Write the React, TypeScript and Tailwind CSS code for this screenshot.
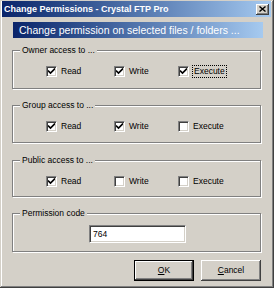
import type { ReactNode } from "react";

const font = "font-['Liberation_Sans',Arial,sans-serif]";

function CheckBox({ checked, label, focused }: { checked: boolean; label: string; focused?: boolean }) {
  return (
    <div className="flex items-center gap-[4px]">
      <div className="w-[11px] h-[11px] bg-white border border-[#808080] border-r-white border-b-white shadow-[inset_1px_1px_0_#404040,inset_-1px_-1px_0_#D4D0C8] flex items-center justify-center">
        {checked && (
          <svg width="7" height="7" viewBox="0 0 7 7">
            <path d="M0 2.5 L2.5 5 L7 0.5" stroke="#000" strokeWidth="1.6" fill="none" />
          </svg>
        )}
      </div>
      <span className={focused ? "text-[8.5px] leading-[11px] px-[1px] outline outline-1 outline-dotted outline-[#000]" : "text-[8.5px] leading-[11px]"}>
        {label}
      </span>
    </div>
  );
}

function GroupBox({ title, className, children }: { title: string; className: string; children: ReactNode }) {
  return (
    <div className={`relative ml-[12px] w-[249px] border border-[#808080] shadow-[inset_1px_1px_0_#fff,1px_1px_0_#fff] ${className}`}>
      <span className="absolute -top-[7px] left-[7px] px-[2px] bg-[#D4D0C8] text-[8.5px] leading-[12px] text-black">{title}</span>
      {children}
    </div>
  );
}

function PermRow({ read, write, exec, focusExec }: { read: boolean; write: boolean; exec: boolean; focusExec?: boolean }) {
  return (
    <div className="flex pl-[33px] pt-[15px]">
      <div className="w-[68px]">
        <CheckBox checked={read} label="Read" />
      </div>
      <div className="w-[64px]">
        <CheckBox checked={write} label="Write" />
      </div>
      <div>
        <CheckBox checked={exec} label="Execute" focused={focusExec} />
      </div>
    </div>
  );
}

export default function App() {
  return (
    <div
      className={`w-[274px] h-[288px] bg-[#D4D0C8] flex flex-col text-black ${font} shadow-[inset_-1px_-1px_0_#404040,inset_1px_1px_0_#D4D0C8,inset_-2px_-2px_0_#808080,inset_2px_2px_0_#fff]`}
    >
      <div className="mt-[1px] ml-[2px] mr-[3px] h-[16px] flex items-center bg-gradient-to-r from-[#0A246A] to-[#A6CAF0]">
        <span className="ml-[2px] text-[9px] font-bold text-white leading-none">Change Permissions - Crystal FTP Pro</span>
        <div className="ml-auto mr-[2px] w-[13px] h-[11px] bg-[#D4D0C8] shadow-[inset_-1px_-1px_0_#404040,inset_1px_1px_0_#fff,inset_-2px_-2px_0_#808080] flex items-center justify-center">
          <svg width="7" height="6" viewBox="0 0 7 6">
            <path d="M0.5 0.5 L6.5 5.5 M6.5 0.5 L0.5 5.5" stroke="#000" strokeWidth="1.4" fill="none" />
          </svg>
        </div>
      </div>

      <div className="mt-[5px] ml-[13px] w-[250px] h-[16px] flex items-center bg-gradient-to-r from-[#0A246A] to-[#A6CAF0]">
        <span className="ml-[6px] text-[10.5px] text-white leading-none">Change permission on selected files / folders ...</span>
      </div>

      <GroupBox title="Owner access to ..." className="mt-[12px] h-[39px]">
        <PermRow read write exec focusExec />
      </GroupBox>

      <GroupBox title="Group access to ..." className="mt-[16px] h-[38px]">
        <PermRow read write exec={false} />
      </GroupBox>

      <GroupBox title="Public access to ..." className="mt-[17px] h-[37px]">
        <PermRow read write={false} exec={false} />
      </GroupBox>

      <GroupBox title="Permission code" className="mt-[16px] h-[39px]">
        <div className="pl-[76px] pt-[11px]">
          <div className="w-[97px] h-[18px] bg-white border border-[#808080] border-r-white border-b-white shadow-[inset_1px_1px_0_#404040,inset_-1px_-1px_0_#D4D0C8] flex items-center">
            <span className="ml-[3px] text-[8.5px]">764</span>
          </div>
        </div>
      </GroupBox>

      <div className="mt-[8px] ml-[134px] flex gap-[7px]">
        <button className="w-[60px] h-[21px] border border-black bg-[#D4D0C8] shadow-[inset_-1px_-1px_0_#404040,inset_1px_1px_0_#fff,inset_-2px_-2px_0_#808080] text-[8.5px] flex items-center justify-center">
          <span><span className="underline">O</span>K</span>
        </button>
        <button className="w-[60px] h-[21px] bg-[#D4D0C8] shadow-[inset_-1px_-1px_0_#404040,inset_1px_1px_0_#fff,inset_-2px_-2px_0_#808080] text-[8.5px] flex items-center justify-center">
          <span><span className="underline">C</span>ancel</span>
        </button>
      </div>
    </div>
  );
}
